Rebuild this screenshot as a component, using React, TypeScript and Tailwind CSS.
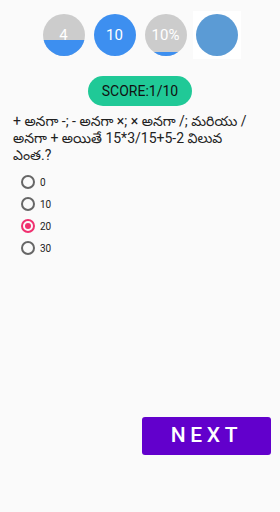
export default function App() {
  const options = ['0', '10', '20', '30']
  const selected = '20'

  return (
    <div
      className="min-h-[512px] w-[280px] bg-[#fafafa] flex flex-col"
      style={{ fontFamily: 'Roboto, "Noto Sans", "Noto Sans Telugu", sans-serif' }}
    >
      {/* status circles */}
      <div className="flex justify-center gap-[9px] pt-[14px]">
        <div className="relative w-[42px] h-[42px] rounded-full overflow-hidden bg-[#cccccc]">
          <div className="absolute bottom-0 left-0 right-0 h-[16px] bg-[#3d8ff0]" />
          <span className="absolute inset-0 flex items-center justify-center text-white text-[15px]">4</span>
        </div>
        <div className="w-[42px] h-[42px] rounded-full bg-[#3d8ff0] flex items-center justify-center text-white text-[15px]">
          10
        </div>
        <div className="relative w-[42px] h-[42px] rounded-full overflow-hidden bg-[#cccccc]">
          <div className="absolute bottom-0 left-0 right-0 h-[4px] bg-[#3d8ff0]" />
          <span className="absolute inset-0 flex items-center justify-center text-white text-[15px]">10%</span>
        </div>
        <div className="relative w-[42px] h-[42px]">
          <div className="absolute -inset-[3px] bg-white" />
          <div className="relative w-[42px] h-[42px] rounded-full bg-[#5b9bd5]" />
        </div>
      </div>

      {/* score */}
      <div className="flex justify-center mt-[20px]">
        <div className="w-[104px] h-[30px] rounded-full bg-[#20c997] flex items-center justify-center text-[14px] text-[#111]">
          SCORE:1/10
        </div>
      </div>

      {/* question */}
      <p className="pl-[13px] pr-[20px] mt-[7px] text-[14px] leading-[17px] text-[#222]">
        + అనగా -; - అనగా ×; × అనగా /; మరియు / అనగా + అయితే 15*3/15+5-2 విలువ ఎంత.?
      </p>

      {/* options */}
      <div className="flex flex-col gap-[8px] pl-[21px] mt-[11px]">
        {options.map((o) => (
          <div key={o} className="flex items-center gap-[5px] h-[14px]">
            {o === selected ? (
              <div className="w-[14px] h-[14px] rounded-full border-2 border-[#f0306f] flex items-center justify-center">
                <div className="w-[6px] h-[6px] rounded-full bg-[#f0306f]" />
              </div>
            ) : (
              <div className="w-[14px] h-[14px] rounded-full border-2 border-[#666]" />
            )}
            <span className="text-[10px] text-[#222]">{o}</span>
          </div>
        ))}
      </div>

      <div className="flex-1" />

      {/* next */}
      <div className="flex justify-end pr-[9px] pb-[57px]">
        <button className="w-[129px] h-[38px] rounded-[3px] bg-[#6200cc] text-white text-[21px] font-medium tracking-[0.22em]">
          NEXT
        </button>
      </div>
    </div>
  )
}
